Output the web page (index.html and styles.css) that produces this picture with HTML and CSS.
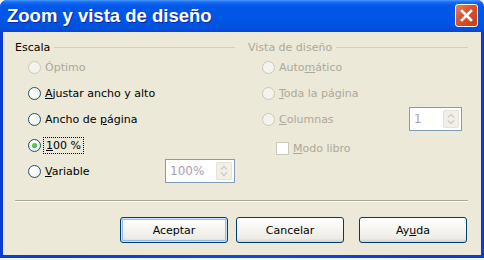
FILE: index.html
```html
<!DOCTYPE html>
<html lang="es">
  <head>
    <meta charset="utf-8" />
    <title>Zoom y vista de diseño</title>
    <link rel="stylesheet" href="styles.css">
  </head>
  <body>
    <div class="window">
      <div class="titlebar">
        <span class="title">Zoom y vista de diseño</span>
        <span class="close">
          <svg width="13" height="13" viewBox="0 0 13 13"><path d="M2 2 L11 11 M11 2 L2 11" stroke="#fff" stroke-width="2.6" stroke-linecap="square"/></svg>
        </span>
      </div>
      <div class="content">
        <div class="groups">
          <div class="group">
            <div class="legend"><span>Escala</span><i></i></div>
            <div class="row off"><span class="radio"></span><span>Óptimo</span></div>
            <div class="row"><span class="radio"></span><span><u>A</u>justar ancho y alto</span></div>
            <div class="row"><span class="radio"></span><span>Ancho de <u>p</u>ágina</span></div>
            <div class="row"><span class="radio checked"></span><span class="focus"><u>1</u>00 %</span></div>
            <div class="row">
              <span class="radio"></span><span><u>V</u>ariable</span>
              <div class="spin wide">
                <span class="val">100%</span>
                <span class="arrows">
                  <svg width="8" height="12" viewBox="0 0 8 12"><path d="M1 4.5 L4 1.5 L7 4.5 M1 7.5 L4 10.5 L7 7.5" fill="none" stroke="#cfcdc3" stroke-width="1.4"/></svg>
                </span>
              </div>
            </div>
          </div>
          <div class="group off">
            <div class="legend"><span>Vista de diseño</span><i></i></div>
            <div class="row"><span class="radio"></span><span>Auto<u>m</u>ático</span></div>
            <div class="row"><span class="radio"></span><span><u>T</u>oda la página</span></div>
            <div class="row">
              <span class="radio"></span><span><u>C</u>olumnas</span>
              <div class="spin">
                <span class="val">1</span>
                <span class="arrows">
                  <svg width="8" height="12" viewBox="0 0 8 12"><path d="M1 4.5 L4 1.5 L7 4.5 M1 7.5 L4 10.5 L7 7.5" fill="none" stroke="#cfcdc3" stroke-width="1.4"/></svg>
                </span>
              </div>
            </div>
            <div class="row sub"><span class="check"></span><span><u>M</u>odo libro</span></div>
          </div>
        </div>
        <div class="separator"></div>
        <div class="buttons">
          <button class="default">Aceptar</button>
          <button class="cancel">Cancelar</button>
          <button>Ay<u>u</u>da</button>
        </div>
      </div>
    </div>
  </body>
</html>
```

FILE: styles.css
```css
body {
  margin: 0;
  width: 484px;
  height: 260px;
  background: #f4f4f2;
  font-family: "DejaVu Sans", sans-serif;
  font-size: 11px;
  color: #000;
}

.window {
  width: 484px;
  height: 258px;
  box-sizing: border-box;
  padding: 0 3px 3px 3px;
  background: linear-gradient(to right, #0a3bd2, #0a4ae0 50%, #0a3bd2);
  border-radius: 7px 7px 0 0;
  display: flex;
  flex-direction: column;
}

.titlebar {
  height: 32px;
  margin: 0 -3px;
  padding: 0 6px 0 7px;
  border-radius: 7px 7px 0 0;
  background: linear-gradient(to bottom, #4b9bff 0, #1a6cf2 2px, #0058e8 6px, #0055e5 22px, #0050dc 28px, #0a44d4 32px);
  display: flex;
  align-items: center;
  justify-content: space-between;
}

.title {
  font-family: "Liberation Sans", sans-serif;
  font-weight: bold;
  font-size: 18.5px;
  color: #fff;
  text-shadow: 1px 1px 0 #0a2a9c;
  padding-bottom: 1px;
}

.close {
  width: 23px;
  height: 23px;
  box-sizing: border-box;
  border: 1px solid #fff;
  border-radius: 3px;
  background: linear-gradient(135deg, #e9805e 0, #d9532f 40%, #c2401d 100%);
  display: flex;
  align-items: center;
  justify-content: center;
  margin-bottom: 1px;
}

.content {
  flex: 1;
  background: #ece9d8;
  padding: 8px 13px 0 12px;
}

.groups {
  display: grid;
  grid-template-columns: 220px 220px;
  column-gap: 13px;
}

.legend {
  height: 14px;
  display: flex;
  align-items: center;
  gap: 4px;
}

.legend i {
  flex: 1;
  height: 0;
  border-top: 1px solid #d0d0bf;
}

.row {
  height: 26px;
  display: flex;
  align-items: center;
  gap: 4px;
  padding-left: 13px;
}

.group.off .row {
  padding-left: 14px;
}

.group.off .row.sub {
  padding-left: 28px;
  padding-top: 3px;
}

.off,
.group.off .legend {
  color: #aca899;
}

.radio {
  width: 13px;
  height: 13px;
  box-sizing: border-box;
  border: 1px solid #1c5180;
  border-radius: 50%;
  background: radial-gradient(circle at 35% 35%, #fff 30%, #e6e4dc 100%);
  display: flex;
  align-items: center;
  justify-content: center;
}

.radio.checked::after {
  content: "";
  width: 5px;
  height: 5px;
  border-radius: 50%;
  background: radial-gradient(circle at 40% 40%, #6ad46a, #21a121);
}

.off .radio {
  border-color: #cac8bb;
  background: #f4f3ee;
}

.check {
  width: 13px;
  height: 13px;
  box-sizing: border-box;
  border: 1px solid #cac8bb;
  background: #fff;
}

.focus {
  outline: 1px dotted #000;
  outline-offset: 1px;
  padding: 0 1px;
}

.spin {
  margin-left: auto;
  margin-right: 6px;
  width: 53px;
  height: 24px;
  box-sizing: border-box;
  border: 1px solid #7f9db9;
  background: #fff;
  padding: 2px;
  display: flex;
  align-items: center;
}

.spin.wide {
  width: 70px;
  margin-right: 0;
}

.spin .val {
  flex: 1;
  padding-left: 2px;
  color: #a79fab;
  font-size: 12px;
}

.spin .arrows {
  width: 16px;
  height: 100%;
  box-sizing: border-box;
  border: 1px solid #e4e2da;
  border-radius: 2px;
  background: #f1efe6;
  display: flex;
  align-items: center;
  justify-content: center;
}

.separator {
  margin-top: 16px;
  border-top: 1px solid #aca899;
  border-bottom: 1px solid #fff;
}

.buttons {
  margin-top: 15px;
  display: flex;
  justify-content: flex-end;
  padding-right: 1px;
}

.buttons button {
  width: 108px;
  height: 26px;
  border: 1px solid #003c74;
  border-radius: 3px;
  background: linear-gradient(to bottom, #ffffff 0, #f7f7f3 40%, #ecebe6 85%, #d6d0c5 100%);
  font-family: inherit;
  font-size: 11px;
  color: #000;
  padding: 0;
}

.buttons button.default {
  margin-right: 8px;
  box-shadow: inset 0 0 0 1px #cee7ff, inset 0 0 0 2px #98b8ea;
}

.buttons button.cancel {
  margin-right: 15px;
}
```
